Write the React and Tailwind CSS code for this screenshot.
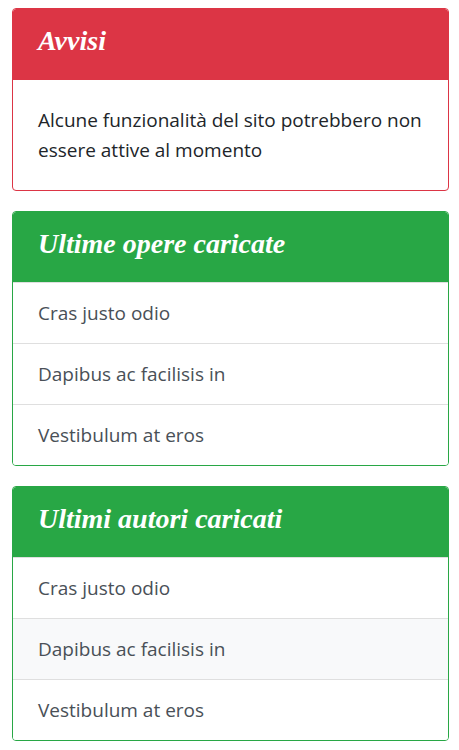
import React from 'react';

const items = ['Cras justo odio', 'Dapibus ac facilisis in', 'Vestibulum at eros'];

function CardHeader({ title, color }) {
  return (
    <div className={`${color} px-[25px] pb-[6px] h-[70px] flex items-center rounded-t-[3px]`}>
      <h3 className="text-white text-[28px] leading-none font-bold italic [font-family:'Liberation_Serif',serif]">
        {title}
      </h3>
    </div>
  );
}

function ListCard({ title, active }) {
  return (
    <div className="border border-[#28a745] rounded-[4px] overflow-hidden">
      <CardHeader title={title} color="bg-[#28a745]" />
      <ul>
        {items.map((item, i) => (
          <li
            key={item}
            className={`h-[61px] flex items-center px-[25px] border-t border-[#dfdfdf] text-[#495057] ${active === i ? 'bg-[#f8f9fa]' : 'bg-white'}`}
          >
            {item}
          </li>
        ))}
      </ul>
    </div>
  );
}

export default function App() {
  return (
    <div className="bg-white min-h-[750px] pl-3 pr-[10px] pt-2 flex flex-col gap-[20px] text-[19px] leading-[30px] [font-family:'Open_Sans',sans-serif]">
      {/* Avvisi */}
      <div className="border border-[#dc3545] rounded-[4px] overflow-hidden">
        <CardHeader title="Avvisi" color="bg-[#dc3545]" />
        <div className="border-t border-[#dc3545] pl-[25px] pr-[18px] pt-[25px] pb-[25px] text-[#212529]">
          <p>Alcune funzionalità del sito potrebbero non essere attive al momento</p>
        </div>
      </div>

      <ListCard title="Ultime opere caricate" />
      <ListCard title="Ultimi autori caricati" active={1} />
    </div>
  );
}
